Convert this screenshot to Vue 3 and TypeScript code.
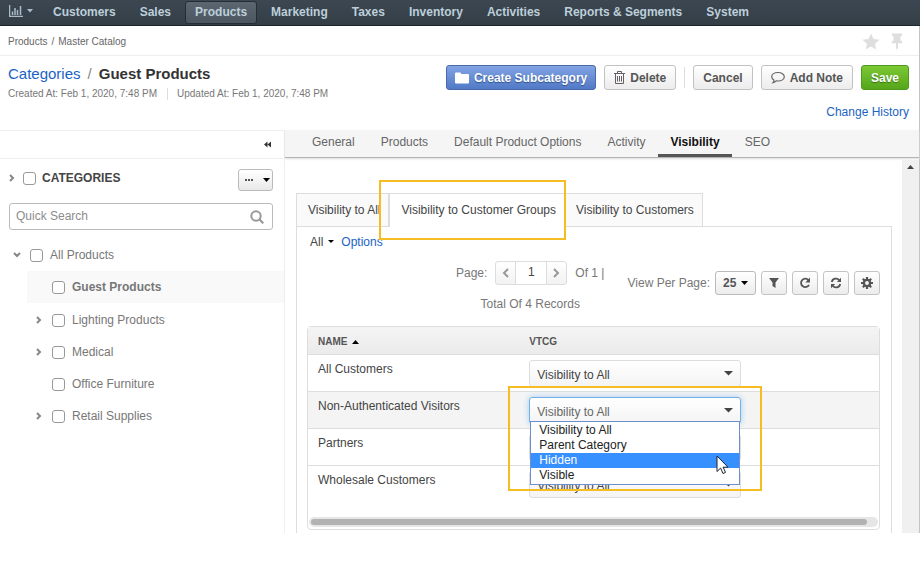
<script setup lang="ts">
import { ref } from 'vue'

interface NavItem { label: string; active?: boolean }
interface Category { label: string; expandable: boolean; selected?: boolean }
interface GridRow { name: string; value: string; open?: boolean }

const nav: NavItem[] = [
  { label: 'Customers' },
  { label: 'Sales' },
  { label: 'Products', active: true },
  { label: 'Marketing' },
  { label: 'Taxes' },
  { label: 'Inventory' },
  { label: 'Activities' },
  { label: 'Reports & Segments' },
  { label: 'System' },
]

const categories: Category[] = [
  { label: 'Guest Products', expandable: false, selected: true },
  { label: 'Lighting Products', expandable: true },
  { label: 'Medical', expandable: true },
  { label: 'Office Furniture', expandable: false },
  { label: 'Retail Supplies', expandable: true },
]

const sections = ['General', 'Products', 'Default Product Options', 'Activity', 'Visibility', 'SEO']
const activeSection = ref('Visibility')

const scopes = ['Visibility to All', 'Visibility to Customer Groups', 'Visibility to Customers']
const activeScope = ref('Visibility to Customer Groups')

const options = ['Visibility to All', 'Parent Category', 'Hidden', 'Visible']
const hovered = ref('Hidden')

const rows = ref<GridRow[]>([
  { name: 'All Customers', value: 'Visibility to All' },
  { name: 'Non-Authenticated Visitors', value: 'Visibility to All', open: true },
  { name: 'Partners', value: 'Visibility to All' },
  { name: 'Wholesale Customers', value: 'Visibility to All' },
])

const page = ref('1')
const perPage = ref('25')

function choose(row: GridRow, option: string) {
  row.value = option
  row.open = false
}
</script>

<template>
  <div class="page">
    <nav class="topbar">
      <button class="dash" type="button" aria-label="Dashboards">
        <svg width="14" height="12" viewBox="0 0 14 12"><path d="M0.5 0v11.5H14M3.500 10V6.500M6 10V3M8.500 10V5M11.500 10V1" fill="none" stroke="currentColor" stroke-width="1.500" /></svg>
        <svg width="6" height="4" viewBox="0 0 6 4"><path d="M0 0h6L3 3.500z" fill="currentColor" /></svg>
      </button>
      <a v-for="item in nav" :key="item.label" href="#" :class="{ active: item.active }">{{ item.label }}</a>
    </nav>

    <div class="frame">
      <div class="crumbs">
        <div class="trail"><span>Products</span><span>/</span><span>Master Catalog</span></div>
        <div class="marks">
          <button type="button" aria-label="Favorite">
            <svg width="18" height="17" viewBox="0 0 18 17"><path d="M9 0.500l2.500 5.600 6 .6-4.500 4 1.300 5.900L9 13.500l-5.300 3.100L5 10.700l-4.500-4 6-.6z" fill="#dedede" /></svg>
          </button>
          <button type="button" aria-label="Pin">
            <svg width="12" height="17" viewBox="0 0 12 17"><path d="M1 0.500h10v2.500H9.500v4.500c1.300.5 2 1.500 2 2.800H7V15l-1 2-1-2v-4.700H.500c0-1.300.7-2.300 2-2.800V3H1z" fill="#dedede" /></svg>
          </button>
        </div>
      </div>

      <header class="head">
        <div class="title">
          <h1><a href="#">Categories</a><i>/</i>Guest Products</h1>
          <p><span>Created At: Feb 1, 2020, 7:48 PM</span><span>Updated At: Feb 1, 2020, 7:48 PM</span></p>
        </div>
        <div class="actions">
          <div class="buttons">
            <button class="btn primary" type="button">
              <svg width="14" height="12" viewBox="0 0 14 12"><path d="M0 1.500Q0 .500 1 .500h4q1 0 1 1V2h7q1 0 1 1v7.500q0 1-1 1H1q-1 0-1-1z" fill="#fff" /></svg>
              Create Subcategory
            </button>
            <button class="btn" type="button">
              <svg width="11" height="13" viewBox="0 0 11 13"><path d="M0 2.500h11M3.500 2V.5h4V2M1.500 3v9.500h8V3M3.500 5v5.500M5.500 5v5.500M7.500 5v5.500" fill="none" stroke="#665f66" /></svg>
              Delete
            </button>
            <span class="divider"></span>
            <button class="btn" type="button">Cancel</button>
            <button class="btn note" type="button">
              <svg width="14" height="13" viewBox="0 0 14 13"><path d="M7 1.500c3.600 0 6.300 1.900 6.300 4.300S10.600 10 7 10c-.6 0-1.100 0-1.700-.1-1 1-2 1.500-3.300 1.700.7-.7 1-1.400 1-2.400C1.600 8.400.7 7.200.7 5.800.7 3.400 3.400 1.500 7 1.500z" fill="none" stroke="#666" stroke-width="1.200" /></svg>
              Add Note
            </button>
            <button class="btn save" type="button">Save</button>
          </div>
          <a class="history" href="#">Change History</a>
        </div>
      </header>

      <div class="body">
        <aside class="sidebar">
          <div class="collapse">
            <button type="button" aria-label="Collapse sidebar">
              <svg width="7" height="7" viewBox="0 0 7 7"><path d="M3.500 .500v6L0 3.500zM7 .500v6L3.500 3.500z" fill="#333" /></svg>
            </button>
          </div>
          <div class="rootline">
            <svg class="chev" width="6" height="8" viewBox="0 0 6 8"><path d="M1 1l3 3-3 3" /></svg>
            <input id="cat-root" type="checkbox" />
            <label for="cat-root">CATEGORIES</label>
            <button class="more" type="button" aria-label="More actions">
              <svg width="9" height="3" viewBox="0 0 9 3"><path d="M0 0h2v2H0zM3 0h2v2H3zM6 0h2v2H6z" fill="#555" /></svg>
              <svg width="7" height="4" viewBox="0 0 7 4"><path d="M0 0h7L3.500 4z" fill="#000" /></svg>
            </button>
          </div>
          <div class="search">
            <input type="text" placeholder="Quick Search" aria-label="Quick Search" />
            <svg width="14" height="14" viewBox="0 0 14 14"><circle cx="6" cy="6" r="4.700" fill="none" stroke="#999" stroke-width="2" /><path d="M9.300 9.300l4 4" stroke="#999" stroke-width="2.200" /></svg>
          </div>
          <div class="tree">
            <div class="node top">
              <svg class="chev" width="8" height="6" viewBox="0 0 8 6"><path d="M1 1l3 3 3-3" /></svg>
              <input id="cat-all" type="checkbox" />
              <label for="cat-all">All Products</label>
            </div>
            <div v-for="(c, i) in categories" :key="c.label" class="node" :class="{ selected: c.selected }">
              <span class="slot">
                <svg v-if="c.expandable" class="chev" width="6" height="8" viewBox="0 0 6 8"><path d="M1 1l3 3-3 3" /></svg>
              </span>
              <input :id="'cat-' + i" type="checkbox" />
              <label :for="'cat-' + i">{{ c.label }}</label>
            </div>
          </div>
        </aside>

        <main class="main">
          <div class="sections">
            <button v-for="s in sections" :key="s" type="button" :class="{ active: s === activeSection }" @click="activeSection = s">{{ s }}</button>
          </div>
          <div class="scroller">
            <div class="content">
              <div class="scopes">
                <div v-for="s in scopes" :key="s" class="scope" :class="{ active: s === activeScope }">
                  <button type="button" @click="activeScope = s">{{ s }}</button>
                  <span v-if="s === activeScope" class="mark scope-mark"></span>
                </div>
              </div>
              <div class="panel">
                <div class="filters">
                  <button type="button">All <svg width="6" height="4" viewBox="0 0 6 4"><path d="M0 0h6L3 3z" fill="#000" /></svg></button>
                  <a href="#">Options</a>
                </div>
                <div class="toolbar">
                  <div class="paging">
                    <div class="pager">
                      <label for="page">Page:</label>
                      <span class="stepper">
                        <button type="button" aria-label="Previous page"><svg width="7" height="10" viewBox="0 0 7 10"><path d="M6 1L2 5l4 4" fill="none" stroke="#999" stroke-width="2" /></svg></button>
                        <input id="page" v-model="page" type="text" />
                        <button type="button" aria-label="Next page"><svg width="7" height="10" viewBox="0 0 7 10"><path d="M1 1l4 4-4 4" fill="none" stroke="#999" stroke-width="2" /></svg></button>
                      </span>
                      <span>Of 1 |</span>
                    </div>
                    <div class="total">Total Of 4 Records</div>
                  </div>
                  <div class="tools">
                    <label for="per-page">View Per Page:</label>
                    <span class="pick small">
                      <select id="per-page" v-model="perPage"><option>10</option><option>25</option><option>50</option></select>
                      <svg width="7" height="4" viewBox="0 0 7 4"><path d="M0 0h7L3.500 4z" fill="#000" /></svg>
                    </span>
                    <button class="tool" type="button" aria-label="Filter"><svg width="12" height="12" viewBox="0 0 12 12"><path d="M1 1h10L7.500 5.500V11L4.500 9V5.500z" fill="#555" /></svg></button>
                    <button class="tool" type="button" aria-label="Refresh"><svg width="12" height="12" viewBox="0 0 12 12"><path d="M9.500 3.200A4.200 4.200 0 1 0 10 7.800" fill="none" stroke="#555" stroke-width="1.800" /><path d="M11 .5v5H6.300z" fill="#555" /></svg></button>
                    <button class="tool" type="button" aria-label="Reset"><svg width="12" height="12" viewBox="0 0 12 12"><path d="M1.800 5A4.200 4.200 0 0 1 9.300 3.300M10.200 7A4.200 4.200 0 0 1 2.700 8.700" fill="none" stroke="#555" stroke-width="1.800" /><path d="M11 .8v4.200H6.800zM1 11.200V7h4.200z" fill="#555" /></svg></button>
                    <button class="tool" type="button" aria-label="Grid settings"><svg width="12" height="12" viewBox="0 0 12 12"><circle cx="6" cy="6" r="3.100" fill="none" stroke="#555" stroke-width="2.400" /><path d="M6 0v2.500M6 9.500V12M0 6h2.500M9.500 6H12M1.800 1.800l1.700 1.700M8.500 8.500l1.700 1.700M10.200 1.800L8.500 3.500M3.500 8.500l-1.700 1.700" stroke="#555" stroke-width="2.200" /></svg></button>
                  </div>
                </div>

                <div class="grid">
                  <table>
                    <thead>
                      <tr>
                        <th class="name">NAME <svg width="7" height="4" viewBox="0 0 7 4"><path d="M0 4h7L3.500 0z" fill="#000" /></svg></th>
                        <th>VTCG</th>
                      </tr>
                    </thead>
                    <tbody>
                      <tr v-for="(r, i) in rows" :key="r.name" :class="{ open: r.open }">
                        <td class="name"><label :for="'vis-' + i">{{ r.name }}</label></td>
                        <td>
                          <div class="pick">
                            <select :id="'vis-' + i" v-model="r.value"><option v-for="o in options" :key="o">{{ o }}</option></select>
                            <svg width="9" height="5" viewBox="0 0 9 5"><path d="M0 0h9L4.500 4.500z" fill="#444" /></svg>
                            <ul v-if="r.open" class="menu" role="listbox">
                              <li v-for="o in options" :key="o" role="option" :class="{ hover: o === hovered }" @mouseenter="hovered = o" @click="choose(r, o)">{{ o }}</li>
                            </ul>
                            <span v-if="r.open" class="mark menu-mark"></span>
                            <svg v-if="r.open" class="cursor" width="13" height="20" viewBox="0 0 13 20"><path d="M1 1v15.500l3.600-3.400 2.400 5.400 2.500-1.100-2.400-5.200h4.900z" fill="#fff" stroke="#223" /></svg>
                          </div>
                        </td>
                      </tr>
                    </tbody>
                  </table>
                  <div class="hscroll"><span></span></div>
                </div>
              </div>
            </div>
            <div class="vscroll"><svg width="7" height="4" viewBox="0 0 7 4"><path d="M0 4h7L3.500 0z" fill="#444" /></svg></div>
          </div>
        </main>
      </div>
    </div>
  </div>
</template>

<style>
body {
  background: #fff;
}
</style>

<style scoped>
.page {
  font: 12px/16px "Liberation Sans", Arial, sans-serif;
  color: #444;
}
.page * {
  box-sizing: border-box;
}
button,
input,
select {
  font: inherit;
  color: inherit;
  margin: 0;
}
button {
  padding: 0;
  border: 0;
  background: none;
  white-space: nowrap;
}
a {
  color: #1a63c4;
  text-decoration: none;
}
svg {
  display: block;
  flex: none;
}

.topbar {
  display: flex;
  align-items: flex-start;
  height: 26px;
  padding: 1px 0 0 9px;
  background: linear-gradient(#3d4751, #343e47);
  border-bottom: 1px solid #1d252d;
}
.topbar a {
  padding: 2px 9px 3px;
  margin-right: 4px;
  border: 1px solid transparent;
  border-radius: 3px;
  font-weight: bold;
  color: #bccfda;
  white-space: nowrap;
}
.topbar a.active {
  background: linear-gradient(#5c6670, #4c5660);
  border-color: #252e36;
}
.dash {
  display: flex;
  align-items: center;
  gap: 4px;
  padding-top: 4px;
  margin-right: 10px;
  color: #a9bcc8;
}

.frame {
  border-right: 1px solid #c4c4c4;
}
.crumbs {
  display: flex;
  justify-content: space-between;
  align-items: center;
  height: 30px;
  padding: 2px 16px 0 8px;
  border-bottom: 1px solid #eee;
  font-size: 10px;
  color: #666;
}
.trail {
  display: flex;
  gap: 4px;
}
.marks {
  display: flex;
  gap: 11px;
}
.head {
  display: flex;
  justify-content: space-between;
  height: 74px;
  padding: 9px 10px 0 8px;
}
h1 {
  margin: 0;
  font-size: 15px;
  line-height: 18px;
  color: #333;
}
h1 a {
  font-weight: normal;
}
h1 i {
  margin: 0 7px;
  font-style: normal;
  font-weight: normal;
  color: #888;
}
.title p {
  display: flex;
  margin: 5px 0 0;
  font-size: 10px;
  line-height: 12px;
  color: #777;
}
.title span + span {
  margin-left: 10px;
  padding-left: 9px;
  border-left: 1px solid #ddd;
}
.buttons {
  display: flex;
  gap: 8px;
}
.btn {
  display: flex;
  align-items: center;
  gap: 5px;
  height: 25px;
  padding: 0 9px;
  border: 1px solid #c2c2c2;
  border-radius: 3px;
  background: linear-gradient(#fff, #ececec);
  font-weight: bold;
  color: #555;
}
.primary {
  padding: 0 8px;
  border-color: #4a69a6;
  background: linear-gradient(#82a4e4, #5179c6);
  color: #fff;
  text-shadow: 0 1px 1px #2f4f8c;
}
.save {
  border-color: #4d9a1c;
  background: linear-gradient(#7cc934, #55a51b);
  color: #fff;
  text-shadow: 0 1px 1px #37740f;
}
.divider {
  width: 1px;
  height: 21px;
  align-self: center;
  background: #ddd;
}
.history {
  display: block;
  margin-top: 14px;
  text-align: right;
}

.body {
  display: flex;
}
.sidebar {
  flex: 0 0 285px;
  border-top: 1px solid #eee;
  border-right: 1px solid #eee;
}
.collapse {
  display: flex;
  justify-content: flex-end;
  align-items: center;
  height: 28px;
  padding-right: 13px;
  border-bottom: 1px solid #eee;
}
.chev path {
  fill: none;
  stroke: #888;
  stroke-width: 2;
}
input[type="checkbox"] {
  appearance: none;
  flex: none;
  width: 13px;
  height: 13px;
  border: 1px solid #999;
  border-radius: 3px;
  background: #fff;
}
.rootline {
  display: flex;
  align-items: center;
  height: 42px;
  padding: 0 11px 4px 9px;
}
.rootline input {
  margin: 0 6px 0 8px;
}
.rootline label {
  flex: 1;
  font-weight: bold;
}
.more {
  display: flex;
  align-items: center;
  gap: 9px;
  height: 22px;
  margin-top: 4px;
  padding: 0 2px 0 6px;
  border: 1px solid #bbb;
  border-radius: 3px;
  background: linear-gradient(#fff, #e9e9e9);
}
.search {
  display: flex;
  align-items: center;
  height: 27px;
  margin: 2px 11px 0 9px;
  padding: 0 8px 0 6px;
  border: 1px solid #bbb;
  border-radius: 3px;
}
.search input {
  flex: 1;
  min-width: 0;
  padding: 0 0 2px;
  border: 0;
  outline: 0;
}
.search input::placeholder {
  color: #8c8c8c;
  opacity: 1;
}
.tree {
  padding-top: 9px;
  color: #777;
}
.node {
  display: flex;
  align-items: center;
  height: 32px;
  margin-left: 27px;
}
.node.top {
  margin-left: 13px;
}
.node input {
  margin: 1px 7px 0 9px;
}
.slot {
  width: 16px;
  padding-left: 9px;
}
.selected {
  margin-bottom: 1px;
  background: #f9f9f9;
  font-weight: bold;
}

.main {
  flex: 1;
  min-width: 0;
}
.sections {
  display: flex;
  height: 28px;
  padding-left: 14px;
  border-bottom: 1px solid #b4b4b4;
  background: #f5f5f5;
  box-shadow: 0 1px 2px #ddd;
}
.sections button {
  padding: 0 13px;
  border-bottom: 3px solid transparent;
  color: #666;
}
.sections .active {
  padding: 0 12px;
  border-color: #555;
  font-weight: bold;
  color: #111;
}
.scroller {
  display: flex;
  margin-top: 2px;
}
.content {
  flex: 1;
  min-width: 0;
  padding: 33px 10px 0 11px;
}
.vscroll {
  flex: 0 0 17px;
  padding: 5px;
  background: #f0f0f0;
}
.scopes {
  display: flex;
}
.scope {
  position: relative;
  height: 33px;
  border: 1px solid #ddd;
  border-width: 1px 1px 0 0;
  background: #fafafa;
}
.scope:first-child {
  border-left-width: 1px;
}
.scope.active {
  height: 34px;
  margin-bottom: -1px;
  border-left-width: 1px;
  background: #fff;
}
.scope button {
  height: 32px;
  padding: 0 8px 0 11px;
}
.mark {
  position: absolute;
  border: 2px solid #f5bd22;
  pointer-events: none;
}
.scope-mark {
  inset: -14px -2px -13px -11px;
  z-index: 1;
}
.panel {
  padding: 7px 11px 3px 10px;
  border: 1px solid #ddd;
  border-bottom: 0;
}
.filters {
  display: flex;
  gap: 7px;
  padding-left: 3px;
}
.filters button {
  display: flex;
  align-items: center;
  gap: 5px;
}
.toolbar {
  display: flex;
  justify-content: flex-end;
  gap: 23px;
  height: 76px;
  padding-top: 11px;
  color: #777;
  white-space: nowrap;
}
.pager {
  display: flex;
  align-items: center;
  gap: 8px;
}
.stepper {
  display: flex;
  height: 24px;
  border: 1px solid #ddd;
  border-radius: 3px;
  background: linear-gradient(#fff, #f2f2f2);
}
.stepper button {
  display: grid;
  place-items: center;
  width: 19px;
}
.stepper input {
  width: 32px;
  padding: 0 0 2px;
  border: 1px solid #ddd;
  border-width: 0 1px;
  text-align: center;
  color: #444;
  background: #fff;
}
.total {
  margin-top: 11px;
  text-align: center;
}
.tools {
  display: flex;
  align-items: center;
  gap: 5px;
  height: 24px;
  margin-top: 10px;
}
.tool {
  display: grid;
  place-items: center;
  width: 26px;
  height: 24px;
  border: 1px solid #c4c4c4;
  border-radius: 3px;
  background: linear-gradient(#fff, #ececec);
}
.pick {
  position: relative;
  display: grid;
  align-items: center;
  width: 212px;
}
.pick > * {
  grid-area: 1 / 1;
}
.pick > svg {
  justify-self: end;
  margin-right: 8px;
  pointer-events: none;
}
.pick select {
  appearance: none;
  width: 100%;
  height: 27px;
  padding: 2px 8px 0 7px;
  border: 1px solid #ddd;
  border-radius: 3px;
  background: linear-gradient(#fff, #f4f4f4);
  outline: 0;
}
.pick.small {
  width: 41px;
}
.pick.small select {
  height: 24px;
  padding: 0 7px;
  border-color: #bbb;
  background: linear-gradient(#fff, #ececec);
  font-weight: bold;
  color: #555;
}
.grid {
  border: 1px solid #ddd;
  border-radius: 4px;
  padding-bottom: 2px;
}
table {
  width: 100%;
  border-collapse: separate;
  border-spacing: 0;
}
th,
td {
  padding: 0 10px;
  border-bottom: 1px solid #ddd;
  text-align: left;
}
th {
  height: 28px;
  padding-top: 2px;
  background: linear-gradient(#f4f4f4, #ebebeb);
  font-size: 10px;
  color: #555;
}
th svg {
  display: inline;
  margin-left: 2px;
  vertical-align: 1px;
}
td {
  height: 37px;
  padding: 5px 10px 4px;
}
td.name {
  padding-top: 6px;
  vertical-align: top;
}
.name {
  width: 37%;
}
.open td {
  background: #f4f4f4;
}
tbody tr:last-child td {
  border-bottom-color: transparent;
}
.open .pick select {
  border-color: #74b0e8;
  box-shadow: 0 0 6px #a5cdf2;
  color: #666;
}
.menu {
  position: absolute;
  z-index: 2;
  inset: 24px 1px auto;
  margin: 0;
  padding: 1px 0;
  border: 1px solid #6c8fd0;
  background: #fff;
  list-style: none;
  color: #222;
}
.menu li {
  padding-left: 8px;
  line-height: 15px;
}
.menu .hover {
  background: #3790ff;
  color: #fff;
}
.menu-mark {
  inset: -11px -21px -67px;
  z-index: 2;
}
.pick > .cursor {
  position: absolute;
  z-index: 3;
  top: 58px;
  right: 12px;
  margin: 0;
}
.hscroll {
  height: 10px;
  margin: 14px 1px 0;
  padding: 2px 11px 2px 2px;
  border-radius: 5px;
  background: #e6e6e6;
}
.hscroll span {
  display: block;
  height: 6px;
  border-radius: 3px;
  background: #b2b2b2;
}
</style>
